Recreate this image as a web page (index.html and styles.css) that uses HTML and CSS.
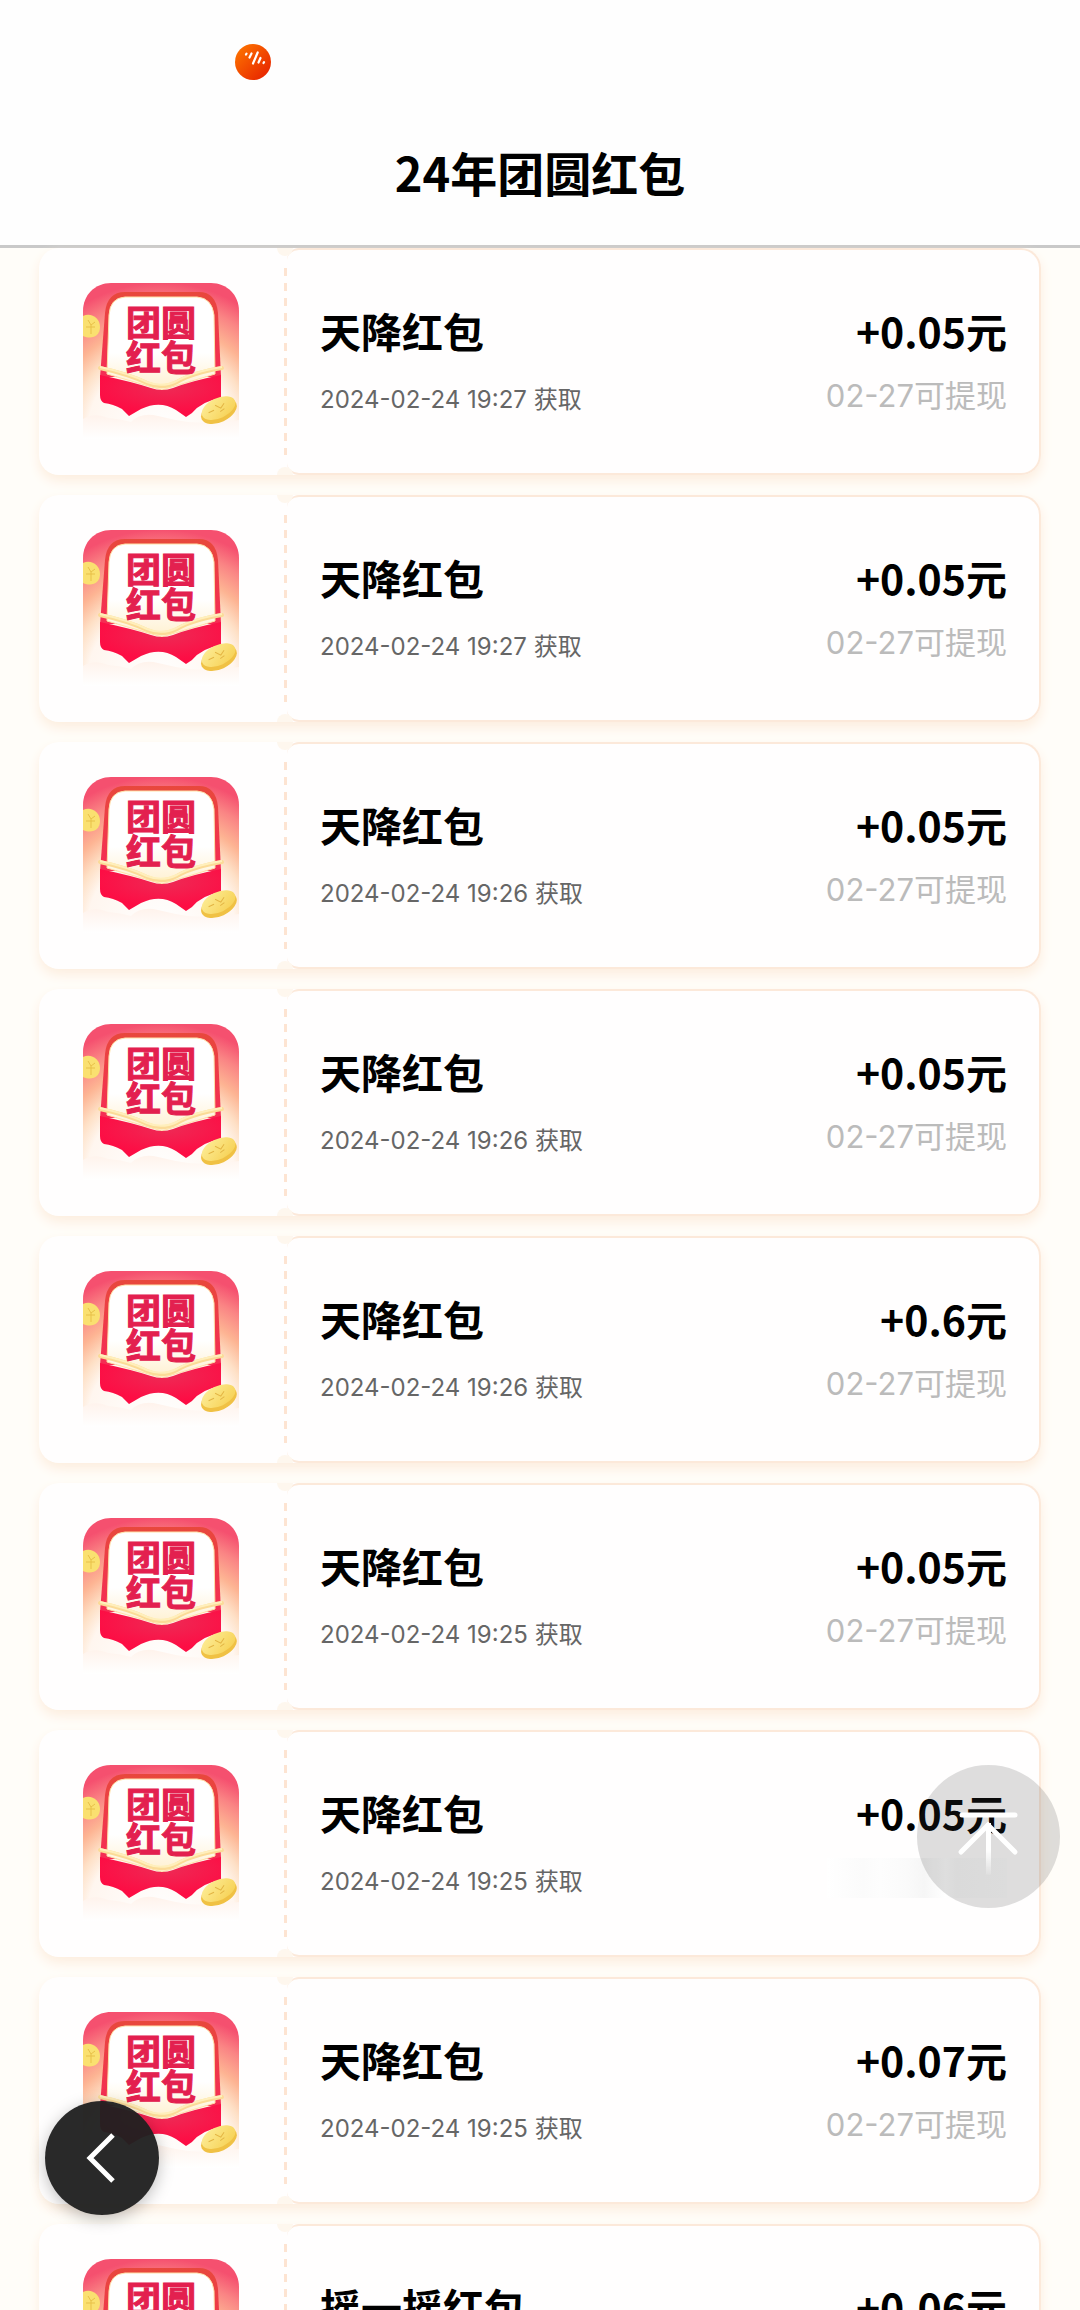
FILE: index.html
```
<!DOCTYPE html>
<html lang="zh-CN">
	<head>
		<meta charset="utf-8">
		<meta name="viewport" content="width=device-width, initial-scale=1">
		<title>24年团圆红包</title>
		<link rel="stylesheet" href="styles.css">
	</head>
	<body>
		<svg class="defs" width="0" height="0" aria-hidden="true">
			<defs>
				<radialGradient id="sky" gradientUnits="userSpaceOnUse" cx="78" cy="150" r="160">
					<stop offset="0" stop-color="#ffffff"/>
					<stop offset="0.46" stop-color="#fff6ef"/>
					<stop offset="0.56" stop-color="#fee0c6"/>
					<stop offset="0.68" stop-color="#fdb493"/>
					<stop offset="0.82" stop-color="#fa8484"/>
					<stop offset="0.94" stop-color="#f5506f"/>
				</radialGradient>
				<linearGradient id="rim" x1="0" y1="0" x2="0" y2="1">
					<stop offset="0" stop-color="#e8483c"/>
					<stop offset="1" stop-color="#f52c55"/>
				</linearGradient>
				<linearGradient id="paper" x1="0" y1="0" x2="0" y2="1">
					<stop offset="0.6" stop-color="#ffffff"/>
					<stop offset="1" stop-color="#fff0cf"/>
				</linearGradient>
				<radialGradient id="pocket" cx="0.55" cy="0.3" r="0.6">
					<stop offset="0" stop-color="#ee2a55"/>
					<stop offset="1" stop-color="#fd0d44"/>
				</radialGradient>
				<linearGradient id="gold" x1="0" y1="0" x2="1" y2="1">
					<stop offset="0" stop-color="#fdee9a"/>
					<stop offset="1" stop-color="#f6cf50"/>
				</linearGradient>
				<linearGradient id="mist" x1="0" y1="0" x2="0" y2="1">
					<stop offset="0" stop-color="#fff3ec"/>
					<stop offset="1" stop-color="#ffffff"/>
				</linearGradient>
				<linearGradient id="stem" gradientUnits="userSpaceOnUse" x1="0" y1="52" x2="0" y2="112">
					<stop offset="0.55" stop-color="#fff"/>
					<stop offset="1" stop-color="#fff" stop-opacity="0"/>
				</linearGradient>
				<linearGradient id="orange" x1="0" y1="0" x2="1" y2="1">
					<stop offset="0" stop-color="#ff7a00"/>
					<stop offset="1" stop-color="#e51c00"/>
				</linearGradient>
				<symbol id="envelope" viewBox="0 0 156 156">
					<path fill="url(#sky)" d="M0 156V28C0 12 12 0 28 0H128C144 0 156 12 156 28V156Z"/>
					<path fill="#fae070" d="M0 33C8 29 17 35 17 44S9 57 0 53Z"/>
					<path fill="none" stroke="#e8c048" d="M5 37L8 42L12 39M3 44H12M8 42V51"/>
					<!-- back of the envelope -->
					<path fill="url(#rim)" d="M17 94L22 30Q24 9 42 9H116Q133 9 135 30L138 94Z"/>
					<path fill="url(#paper)" stroke="#ffe1a8" d="M24 91L26 32Q27 15 42 14H114Q129 15 131 32L132 91L79 107Z"/>
					<!-- front pocket and the clouds under it -->
					<path fill="url(#pocket)" d="M17 92Q50 99 68 105Q79 109 90 105Q108 98 138 92V115Q119 118 109 130L103 134L93 127Q77 117 58 126L46 133L39 126Q30 121 21 120Q17 118 17 112Z"/>
					<path fill="none" stroke="#fbdb97" stroke-width="4" stroke-linecap="round" d="M17 85Q45 91 64 100Q79 107 94 99Q109 90 139 85"/>
					<path fill="none" stroke="#ffefbc" stroke-width="2" d="M17 84Q45 90 64 99Q79 105 94 98Q109 89 139 84"/>
					<path fill="url(#mist)" d="M0 136Q12 129 25 135Q38 136 48 139Q58 129 75 133Q91 137 105 139Q130 141 156 137V156H0Z"/>
					<g transform="rotate(-25 136 126)">
						<ellipse cx="135" cy="128" rx="19" ry="11" fill="#f0c144"/>
						<ellipse cx="136" cy="125" rx="18" ry="10" fill="url(#gold)"/>
						<path fill="none" stroke="#e3b544" d="M125 125H131M134 121L138 126L143 123M136 129L141 128"/>
					</g>
				</symbol>
			</defs>
		</svg>

		<header class="header">
			<div class="status">
				<svg class="app-dot" viewBox="0 0 36 36" aria-hidden="true">
					<circle cx="18" cy="18" r="18" fill="url(#orange)"/>
					<path stroke="#fff" stroke-width="2.2" stroke-linecap="round" d="M11 10.500l.5-.8M14.500 13.500l2-4M18 19.500l4.700-11M23.500 18.500l2-4.500M28.500 19l.5-.8"/>
				</svg>
			</div>
			<h1>24年团圆红包</h1>
		</header>

		<main>
			<ul class="list">
				<li class="ticket">
					<div class="gift"><svg class="art"><use href="#envelope"/></svg><span class="gift-name">团圆<br>红包</span></div>
					<div class="perforation"></div>
					<div class="detail">
						<div class="info"><h2>天降红包</h2><time>2024-02-24 19:27 获取</time></div>
						<div class="money"><strong>+0.05元</strong><span>02-27可提现</span></div>
					</div>
				</li>
				<li class="ticket">
					<div class="gift"><svg class="art"><use href="#envelope"/></svg><span class="gift-name">团圆<br>红包</span></div>
					<div class="perforation"></div>
					<div class="detail">
						<div class="info"><h2>天降红包</h2><time>2024-02-24 19:27 获取</time></div>
						<div class="money"><strong>+0.05元</strong><span>02-27可提现</span></div>
					</div>
				</li>
				<li class="ticket">
					<div class="gift"><svg class="art"><use href="#envelope"/></svg><span class="gift-name">团圆<br>红包</span></div>
					<div class="perforation"></div>
					<div class="detail">
						<div class="info"><h2>天降红包</h2><time>2024-02-24 19:26 获取</time></div>
						<div class="money"><strong>+0.05元</strong><span>02-27可提现</span></div>
					</div>
				</li>
				<li class="ticket">
					<div class="gift"><svg class="art"><use href="#envelope"/></svg><span class="gift-name">团圆<br>红包</span></div>
					<div class="perforation"></div>
					<div class="detail">
						<div class="info"><h2>天降红包</h2><time>2024-02-24 19:26 获取</time></div>
						<div class="money"><strong>+0.05元</strong><span>02-27可提现</span></div>
					</div>
				</li>
				<li class="ticket">
					<div class="gift"><svg class="art"><use href="#envelope"/></svg><span class="gift-name">团圆<br>红包</span></div>
					<div class="perforation"></div>
					<div class="detail">
						<div class="info"><h2>天降红包</h2><time>2024-02-24 19:26 获取</time></div>
						<div class="money"><strong>+0.6元</strong><span>02-27可提现</span></div>
					</div>
				</li>
				<li class="ticket">
					<div class="gift"><svg class="art"><use href="#envelope"/></svg><span class="gift-name">团圆<br>红包</span></div>
					<div class="perforation"></div>
					<div class="detail">
						<div class="info"><h2>天降红包</h2><time>2024-02-24 19:25 获取</time></div>
						<div class="money"><strong>+0.05元</strong><span>02-27可提现</span></div>
					</div>
				</li>
				<li class="ticket">
					<div class="gift"><svg class="art"><use href="#envelope"/></svg><span class="gift-name">团圆<br>红包</span></div>
					<div class="perforation"></div>
					<div class="detail">
						<div class="info"><h2>天降红包</h2><time>2024-02-24 19:25 获取</time></div>
						<div class="money"><strong>+0.05元</strong><span class="smear"></span></div>
					</div>
				</li>
				<li class="ticket">
					<div class="gift"><svg class="art"><use href="#envelope"/></svg><span class="gift-name">团圆<br>红包</span></div>
					<div class="perforation"></div>
					<div class="detail">
						<div class="info"><h2>天降红包</h2><time>2024-02-24 19:25 获取</time></div>
						<div class="money"><strong>+0.07元</strong><span>02-27可提现</span></div>
					</div>
				</li>
				<li class="ticket">
					<div class="gift"><svg class="art"><use href="#envelope"/></svg><span class="gift-name">团圆<br>红包</span></div>
					<div class="perforation"></div>
					<div class="detail">
						<div class="info"><h2>摇一摇红包</h2><time>2024-02-24 19:25 获取</time></div>
						<div class="money"><strong>+0.06元</strong><span>02-27可提现</span></div>
					</div>
				</li>
			</ul>
		</main>

		<button class="round to-top" type="button" aria-label="回到顶部">
			<svg viewBox="0 0 143 143" fill="none" stroke="#fff" stroke-width="5" stroke-linecap="round">
				<path d="M45 50H98M44 87L71 60L98 87"/>
				<rect x="69" y="58" width="5" height="52" fill="url(#stem)" stroke="none"/>
			</svg>
		</button>
		<button class="round back" type="button" aria-label="返回">
			<svg viewBox="0 0 114 114" fill="none" stroke="#fff" stroke-width="5">
				<path d="M68 34L45 57L68 80"/>
			</svg>
		</button>
	</body>
</html>
```
FILE: styles.css
```
* {
	box-sizing: border-box;
}
body {
	margin: 0;
	height: 100vh;
	overflow: hidden;
	background-color: #fffdf9;
	color: #000;
	font-family: Inter, "Noto Sans CJK SC", sans-serif;
}
.defs {
	position: absolute;
}
.header {
	height: 248px;
	background-color: #fefefe;
	border-bottom: 3px solid #c9c9c9;
}
.status {
	height: 124px;
	padding: 44px 235px 0;
}
.app-dot {
	display: block;
	width: 36px;
	height: 36px;
}
h1, h2, strong {
	margin: 0;
	font-family: "Noto Sans CJK SC", sans-serif;
	font-weight: bold;
}
h1 {
	font-size: 47px;
	line-height: 96px;
	text-align: center;
}
.list {
	list-style: none;
	margin: 0;
	padding: 0 39px;
	display: flex;
	flex-direction: column;
	gap: 20px;
}
.ticket {
	display: grid;
	grid-template-columns: 244px 4px 1fr;
	height: 227px;
	border-radius: 20px;
	background-color: #fffefe;
	box-shadow: 0 6px 12px #fdeedf;
}

/* left stub */
.gift {
	display: grid;
	justify-content: start;
	align-content: start;
	padding: 35px 44px;
}
.art {
	grid-area: 1 / 1;
	width: 156px;
	height: 156px;
}
.gift-name {
	grid-area: 1 / 1;
	padding-top: 20px;
	color: #e3204f;
	font-family: "Noto Sans CJK SC", sans-serif;
	font-size: 35px;
	font-weight: bold;
	line-height: 35px;
	text-align: center;
	-webkit-text-stroke: 1px #e3204f;
}
.perforation {
	position: relative;
	background: repeating-linear-gradient(#fde4d2 0 8px, transparent 8px 15px) center / 3px 100% no-repeat content-box;
	padding: 20px 0;
}
.perforation:before,
.perforation:after {
	content: "";
	position: absolute;
	left: -6px;
	width: 16px;
	height: 8px;
	background-color: #fef7ee;
}
.perforation:before {
	top: 0;
	border-radius: 0 0 8px 8px;
}
.perforation:after {
	bottom: 0;
	border-radius: 8px 8px 0 0;
}

/* right part */
.detail {
	display: flex;
	justify-content: space-between;
	align-items: center;
	padding: 0 32px 0 33px;
	border: 2px solid #fce9da;
	border-left: 0;
	border-radius: 12px 20px 20px 12px;
}
.info, .money {
	display: flex;
	flex-direction: column;
}
.info {
	gap: 32px;
}
.money {
	gap: 24px;
	align-items: flex-end;
}
h2, strong {
	font-size: 41px;
	line-height: 44px;
}
time {
	color: #666;
	font-size: 24px;
	line-height: 32px;
}
.money span {
	color: #bbb;
	font-size: 31px;
	line-height: 40px;
}
.money .smear {
	width: 180px;
	height: 40px;
	background: linear-gradient(90deg, #fff, #fbfbfb 20%, #fdfdfd 30%, #fafafa 45%, #f6f6f6 54%, #fff 66%, #fbfbfb 72%, #fdfdfd);
}

/* floating buttons */
.round {
	position: fixed;
	padding: 0;
	border: 0;
	border-radius: 50%;
}
.round svg {
	display: block;
	width: 100%;
}
.to-top {
	right: 20px;
	bottom: 402px;
	width: 143px;
	height: 143px;
	background-color: rgba(60, 60, 60, 0.17);
}
.back {
	left: 45px;
	bottom: 95px;
	width: 114px;
	height: 114px;
	background-color: rgba(32, 32, 32, 0.96);
	box-shadow: 0 4px 16px rgba(0, 0, 0, 0.25);
}
```
